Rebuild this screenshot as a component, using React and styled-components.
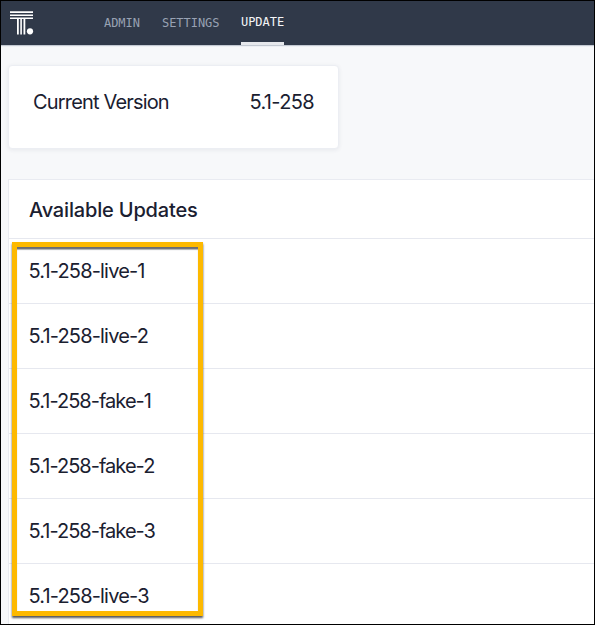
import React from "react";
import styled, { createGlobalStyle } from "styled-components";

const GlobalStyle = createGlobalStyle`
  * { box-sizing: border-box; }
  body { margin: 0; }
`;

const Page = styled.div`
  position: relative;
  width: 595px;
  height: 625px;
  border: 1px solid #000;
  overflow: hidden;
  background: #f7f8fa;
  color: #1a2030;
  font: 20px/24px Inter, "Liberation Sans", sans-serif;
`;

const Header = styled.header`
  display: flex;
  height: 44px;
  padding-left: 9px;
  background: #303949;
  box-shadow: 0 1px 1px #c3c9d2;
`;

const Logo = styled.svg`
  width: 24px;
  height: 25px;
  margin-top: 10px;
  flex: none;
`;

const Nav = styled.nav`
  display: flex;
  gap: 22px;
  margin-left: 70px;
`;

const NavItem = styled.a`
  width: ${(p) => p.$width}px;
  height: 44px;
  padding-top: ${(p) => (p.$active ? 14 : 15)}px;
  border-bottom: 3px solid ${(p) => (p.$active ? "#e6e8ec" : "transparent")};
  color: ${(p) => (p.$active ? "#f4f5f7" : "#98a2b3")};
  font: 12px/15px "DejaVu Sans Mono", monospace;
  letter-spacing: -0.04px;
  white-space: nowrap;
`;

const VersionCard = styled.section`
  display: flex;
  justify-content: space-between;
  width: 331px;
  height: 84px;
  margin: 20px 0 0 7px;
  padding: 24px 24px 0;
  border: 1px solid #eceef3;
  border-radius: 4px;
  background: #fff;
  box-shadow: 0 1px 4px rgba(40, 50, 80, 0.08);
`;

const Label = styled.span`
  letter-spacing: ${(p) => p.$spacing}px;
  white-space: nowrap;
`;

const Updates = styled.section`
  margin: 30px 0 0 7px;
  border: solid #e9ebf1;
  border-width: 1px 0 0 1px;
  background: #fff;
`;

const Heading = styled.h1`
  height: 59px;
  margin: 0;
  padding: 18px 0 0 20px;
  border-bottom: 1px solid #e6e8ef;
  font: inherit;
  font-weight: 500;
  letter-spacing: -0.17px;
`;

const UpdateRow = styled.div`
  height: 65px;
  padding: 20px 0 0 19.5px;
  border-bottom: 1px solid #e6e8ef;
`;

const Highlight = styled.div`
  position: absolute;
  left: 11px;
  top: 241px;
  width: 191px;
  height: 374px;
  border: 5px solid #fdb900;
  box-shadow: 0 2px 2px #55575d, inset 0 3px 1px -0.5px #6b6d73;
  pointer-events: none;
`;

const updates = ["live-1", "live-2", "fake-1", "fake-2", "fake-3", "live-3"];

export default function App() {
  return (
    <>
      <GlobalStyle />
      <Page>
        <Header>
          <Logo viewBox="0 0 24 25" fill="#fff">
            <path d="M0 .3h23v1.6H0zM0 3.4h23v1.6H0zM0 6.4h23v1.6H0zM7 8h1.8v15.4H7zM10.3 8h1.6v15.4h-1.6zM13.5 8h1.8v15.4h-1.8z" />
            <circle cx="20" cy="20.3" r="3.1" />
          </Logo>
          <Nav>
            <NavItem $width={36}>ADMIN</NavItem>
            <NavItem $width={57}>SETTINGS</NavItem>
            <NavItem $width={43} $active>UPDATE</NavItem>
          </Nav>
        </Header>
        <VersionCard>
          <Label $spacing={-0.83}>Current Version</Label>
          <Label $spacing={-0.65}>5.1-258</Label>
        </VersionCard>
        <Updates>
          <Heading>Available Updates</Heading>
          {updates.map((name) => (
            <UpdateRow key={name}>
              <Label $spacing={name.startsWith("live") ? -0.83 : -0.97}>
                5.1-258-{name}
              </Label>
            </UpdateRow>
          ))}
        </Updates>
        <Highlight />
      </Page>
    </>
  );
}
